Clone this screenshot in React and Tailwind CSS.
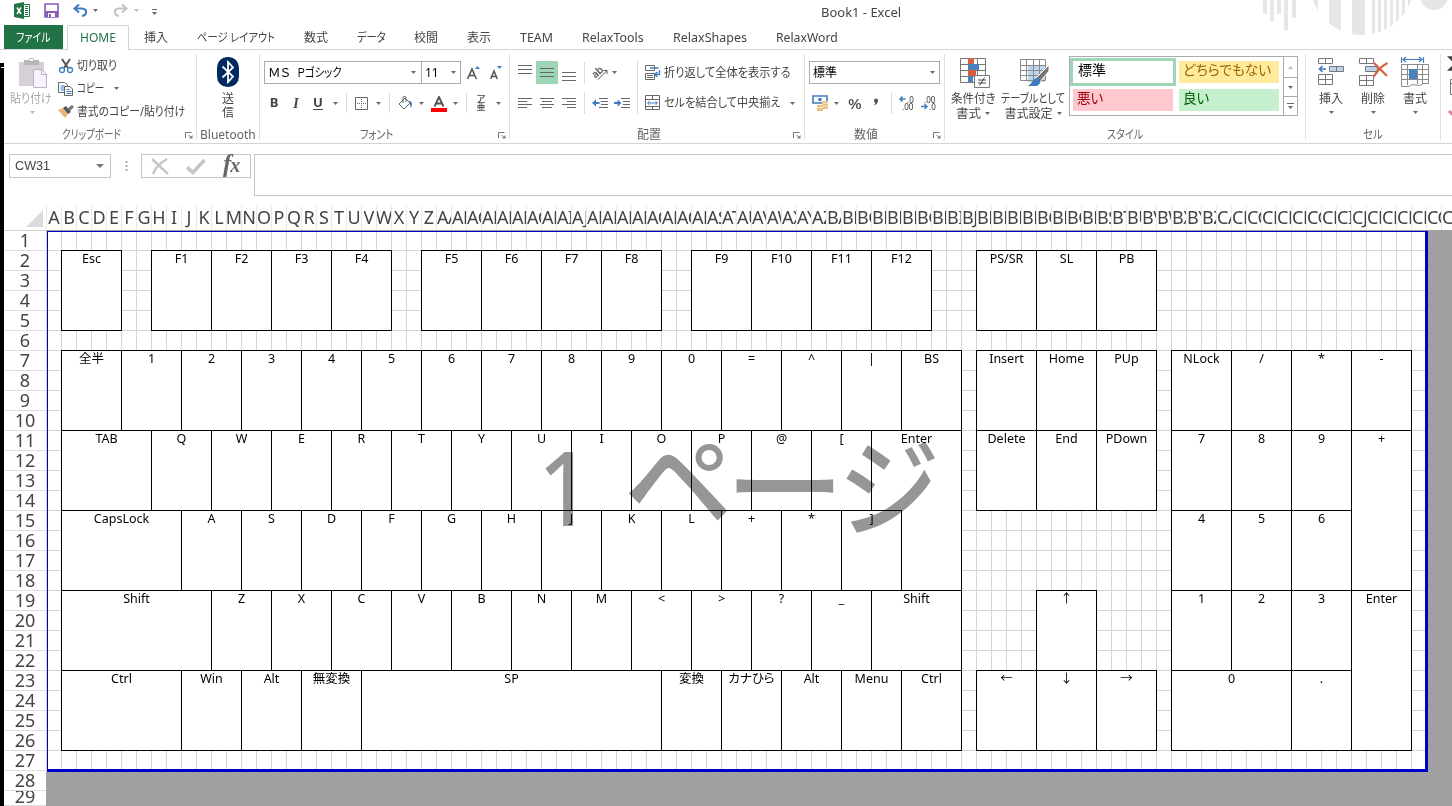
import { useLayoutEffect, useRef, useState } from "react";

/* Text condensed or widened to a given advance width. */
function Fit({ w, className = "", children }) {
  const ref = useRef(null);
  const [s, setS] = useState(1);
  useLayoutEffect(() => {
    setS(w / ref.current.offsetWidth);
  }, [w]);
  return (
    <span className={"block shrink-0 whitespace-nowrap " + className} style={{ width: w }}>
      <span ref={ref} className="inline-block origin-left [font-feature-settings:'palt']" style={{ transform: `scaleX(${s})` }}>
        {children}
      </span>
    </span>
  );
}

function Ic({ w, h, className = "", children }) {
  return (
    <svg width={w} height={h} viewBox={`0 0 ${w} ${h}`} className={"block shrink-0 " + className} fill="none">
      {children}
    </svg>
  );
}

const Arrow = ({ c = "#6a6a6a", className = "" }) => (
  <Ic w={5} h={3} className={className}>
    <path d="M0 0H5L2.5 3Z" fill={c} />
  </Ic>
);

const Slot = ({ className, children }) => <div className={"flex h-full shrink-0 items-center justify-center " + className}>{children}</div>;
const Sep = ({ className = "" }) => <div className={"w-px shrink-0 bg-[#dcdcdc] " + className} />;

const Launcher = ({ className = "" }) => (
  <Ic w={8} h={8} className={className}>
    <path d="M0.5 7V1.500H6.500M3.500 4L6.500 7" stroke="#777" />
    <path d="M7.500 4V7.500H4Z" fill="#777" />
  </Ic>
);

function Group({ className, label, lw, ml, launch, children }) {
  return (
    <div className={"flex h-[93px] shrink-0 flex-col " + className}>
      <div className="flex h-[75px]">{children}</div>
      <div className="flex h-[18px] items-center pt-[2px] text-[12px] leading-[18px] text-[#666]">
        <Fit w={lw} className={ml}>
          {label}
        </Fit>
        {launch && <Launcher className={launch} />}
      </div>
    </div>
  );
}
const GroupSep = () => <div className="mt-[4px] h-[86px] w-px shrink-0 bg-[#e1e1e1]" />;

const Lines = ({ rows }) => (
  <Ic w={14} h={16}>
    {rows.map(([y, x, l], i) => (
      <path key={i} d={`M${x} ${y + 0.5}h${l}`} stroke="#666" />
    ))}
  </Ic>
);

const tabs = [
  ["挿入", 24, "ml-[15px]"],
  ["ページ レイアウト", 78, "ml-[29px]"],
  ["数式", 24, "ml-[29px]"],
  ["データ", 29, "ml-[29px]"],
  ["校閲", 24, "ml-[28px]"],
  ["表示", 24, "ml-[29px]"],
  ["TEAM", 33, "ml-[29px]"],
  ["RelaxTools", 62, "ml-[29px]"],
  ["RelaxShapes", 74, "ml-[29px]"],
  ["RelaxWord", 62, "ml-[29px]"],
];

function TitleBar() {
  return (
    <div className="flex h-[25px] w-full">
      <Ic w={17} h={17} className="ml-[14px] mt-[2px]">
        <path d="M0 2L10 0V17L0 15Z" fill="#217346" />
        <path d="M10 2.500H15.500V14.500H10" stroke="#217346" />
        <path d="M11 4.500h3M11 6.500h3M11 8.500h3M11 10.500h3M11 12.500h3" stroke="#217346" />
        <path d="M3 5.500L7 12M7 5.500L3 12" stroke="#fff" strokeWidth="1.500" />
      </Ic>
      <Ic w={15} h={15} className="ml-[13px] mt-[3px]">
        <path d="M1 1H14V14H1Z" stroke="#8a5cb5" strokeWidth="1.600" />
        <path d="M1 8H14V14H1Z" fill="#8a5cb5" />
        <path d="M4 10H11V14H4Z" fill="#fff" />
        <path d="M5 11H7V14H5Z" fill="#8a5cb5" />
      </Ic>
      <Ic w={15} h={13} className="ml-[14px] mt-[4px]">
        <path d="M1.500 4.500H9C15 5 14 11 9 12M6 0.500L1.500 4.500L6 8.500" stroke="#3f7cbf" strokeWidth="2" />
      </Ic>
      <Arrow className="ml-[5px] mt-[9px]" />
      <Ic w={15} h={13} className="ml-[15px] mt-[4px]">
        <path d="M13.500 4.500H6C0 5 1 11 6 12M9 0.500L13.500 4.500L9 8.500" stroke="#c3c3c3" strokeWidth="2" />
      </Ic>
      <Arrow c="#bbb" className="ml-[6px] mt-[9px]" />
      <Ic w={5} h={7} className="ml-[13px] mt-[9px]">
        <path d="M0 .5H5" stroke="#666" />
        <path d="M0 3H5L2.500 6Z" fill="#666" />
      </Ic>
      <Fit w={80} className="ml-[664px] mt-[4px] text-[12px] leading-[18px] text-[#444]">
        Book1 - Excel
      </Fit>
    </div>
  );
}

function TabRow() {
  return (
    <div className="flex h-[25px] items-stretch border-b border-[#d4d4d4] text-[12px] leading-[26px] text-[#444]">
      <div className="ml-[4px] flex w-[59px] bg-[#217346] text-white">
        <Fit w={35} className="ml-[12px]">
          ファイル
        </Fit>
      </div>
      <div className="-mb-px ml-[4px] flex w-[62px] border border-b-0 border-[#d4d4d4] bg-white leading-[24px] text-[#217346]">
        <Fit w={36} className="ml-[12px]">
          HOME
        </Fit>
      </div>
      {tabs.map(([t, w, m]) => (
        <Fit key={t} w={w} className={m}>
          {t}
        </Fit>
      ))}
    </div>
  );
}

function Clipboard() {
  return (
    <Group className="ml-[4px] w-[192px]" label="クリップボード" lw={59} ml="ml-[58px]" launch="ml-[64px]">
      <div className="ml-[4px] flex w-[48px] flex-col items-center text-[12px] leading-[16px] text-[#a9a9a9]">
        <Ic w={29} h={32} className="ml-[2px] mt-[7px]">
          <path d="M0 5H25V29H0Z" fill="#d6cfd6" />
          <path d="M5 3H10C10 0 15 0 15 3H20V8H5Z" fill="#b9b4b9" />
          <path d="M11 2H14V4H11Z" fill="#fff" />
          <path d="M14.500 12.500H23L27.500 17V30.500H14.500Z" fill="#f7f3fa" stroke="#bcb0c4" />
          <path d="M22.500 12.500V17.500H27.500" stroke="#bcb0c4" />
        </Ic>
        <Fit w={42} className="mt-[2px] -ml-[2px]">
          貼り付け
        </Fit>
        <Arrow c="#bbb" className="mt-[4px]" />
      </div>
      <div className="ml-[2px] flex flex-col pt-[4px] text-[12px] text-[#444]">
        <div className="flex h-[23px] items-center">
          <Ic w={16} h={16}>
            <path d="M4 1L10 10M12 1L6 10" stroke="#555" strokeWidth="2" />
            <circle cx="4" cy="12" r="2.500" stroke="#3f7cbf" strokeWidth="1.300" />
            <circle cx="12" cy="12" r="2.500" stroke="#3f7cbf" strokeWidth="1.300" />
          </Ic>
          <Fit w={40} className="ml-[3px]">
            切り取り
          </Fit>
        </div>
        <div className="flex h-[23px] items-center">
          <Ic w={16} h={16}>
            <path d="M.5 1.500H6.500L9.500 4V11.500H.5Z" fill="#fff" stroke="#666" />
            <path d="M2.500 5h4M2.500 7h4M2.500 9h4" stroke="#3f7cbf" />
            <path d="M6.500 5.500H12L14.500 8V14.500H6.500Z" fill="#fff" stroke="#666" />
            <path d="M8.500 8.500h3M8.500 10.500h5M8.500 12.500h5" stroke="#3f7cbf" />
          </Ic>
          <Fit w={27} className="ml-[3px]">
            コピー
          </Fit>
          <Arrow className="ml-[10px]" />
        </div>
        <div className="flex h-[23px] items-center">
          <Ic w={16} h={14}>
            <path d="M0 5L5 3L10 9L7 13Z" fill="#eab676" />
            <path d="M5 3L8 1L13 7L10 9Z" fill="#555" />
            <path d="M9 4L14 0L16 2L12 6Z" fill="#777" />
          </Ic>
          <Fit w={108} className="ml-[3px]">
            書式のコピー/貼り付け
          </Fit>
        </div>
      </div>
    </Group>
  );
}

function Bluetooth() {
  return (
    <Group className="w-[62px]" label="Bluetooth" lw={56} ml="ml-[3px]">
      <div className="flex w-full flex-col items-center text-[12px] leading-[14px] text-[#444]">
        <Ic w={22} h={30} className="mt-[7px]">
          <rect width="22" height="30" rx="10.500" fill="#00295f" />
          <path d="M5.500 9.500L16 19.500L11 25V5L16 10.500L5.500 20.500" stroke="#fff" strokeWidth="1.800" />
        </Ic>
        <div className="mt-[5px]">送</div>
        <div>信</div>
      </div>
    </Group>
  );
}

function FontGroup() {
  return (
    <Group className="w-[249px]" label="フォント" lw={33} ml="ml-[100px]" launch="ml-[105px]">
      <div className="flex flex-col text-[12px] text-[#444]">
        <div className="mt-[11px] flex h-[23px] items-center">
          <div className="ml-[4px] flex h-[23px] w-[158px] items-center border border-[#ababab] text-black">
            <span className="ml-[3px] flex w-[75px] shrink-0">
              <Fit w={22}>ＭＳ</Fit>
              <Fit w={45} className="ml-[7px]">
                Ｐゴシック
              </Fit>
            </span>
            <Arrow className="ml-[68px]" />
          </div>
          <div className="-ml-px flex h-[23px] w-[40px] items-center border border-[#ababab] text-black">
            <Fit w={14} className="ml-[3px]">
              11
            </Fit>
            <Arrow className="ml-[12px]" />
          </div>
          <Ic w={14} h={15} className="ml-[6px]">
            <path d="M0.700 14L5 4L9.300 14M2.200 10.500H7.800" stroke="#555" strokeWidth="1.600" />
            <path d="M8 4L10.500 1L13 4Z" fill="#3f7cbf" />
          </Ic>
          <Ic w={13} h={15} className="ml-[9px]">
            <path d="M0.700 14L4 6L7.300 14M2 11.500H6" stroke="#555" strokeWidth="1.500" />
            <path d="M7 1L9.500 4L12 1Z" fill="#3f7cbf" />
          </Ic>
        </div>
        <div className="mt-[8px] flex h-[22px] items-center pl-[3px]">
          <Slot className="w-[22px] text-[13px] font-bold">B</Slot>
          <Slot className="w-[22px] font-['Liberation_Serif'] text-[14px] font-bold italic">I</Slot>
          <Slot className="w-[22px] text-[13px] font-bold underline underline-offset-2">U</Slot>
          <Slot className="w-[12px]"><Arrow /></Slot>
          <Slot className="w-[10px]"><Sep className="h-[20px]" /></Slot>
          <Slot className="w-[21px]">
            <Ic w={13} h={13}>
              <path d="M.5.5H12.500V12.500H.5Z" stroke="#666" />
              <path d="M6.500 2V12M2 6.500H12" stroke="#666" strokeDasharray="1 1" />
            </Ic>
          </Slot>
          <Slot className="w-[12px]"><Arrow /></Slot>
          <Slot className="w-[10px]"><Sep className="h-[20px]" /></Slot>
          <Slot className="w-[21px]">
            <Ic w={15} h={14} className="ml-[2px]">
              <path d="M1 8L7 2L12 7L6 13Z" stroke="#666" />
              <path d="M5 7V1.500C5 0 8 0 8 2V6" stroke="#666" />
              <path d="M11 5C14 5 15 8 13 12C12 10 12 7 11 5Z" fill="#3f7cbf" />
            </Ic>
          </Slot>
          <Slot className="w-[12px]"><Arrow /></Slot>
          <Slot className="w-[24px]">
            <Ic w={16} h={16} className="mt-[2px]">
              <path d="M3.500 10.500L8 1L12.500 10.500M5 7.500H11" stroke="#555" strokeWidth="1.900" />
              <path d="M0 12H16V16H0Z" fill="#f00" />
            </Ic>
          </Slot>
          <Slot className="w-[9px]"><Arrow /></Slot>
          <Slot className="w-[12px]"><Sep className="h-[20px]" /></Slot>
          <Slot className="w-[20px] flex-col pr-[2px] text-[9px] leading-[8px] font-medium">
            <span>ア</span>
            <span>亜</span>
          </Slot>
          <Slot className="w-[12px]"><Arrow /></Slot>
        </div>
      </div>
    </Group>
  );
}

function AlignGroup() {
  return (
    <Group className="w-[294px]" label="配置" lw={24} ml="ml-[127px]" launch="ml-[132px]">
      <div className="flex w-[127px] shrink-0 flex-col pt-[11px]">
        <div className="flex h-[23px] items-center">
          <Slot className="ml-[4px] w-[22px]"><Lines rows={[[0, 0, 14], [4, 0, 14], [8, 0, 14]]} /></Slot>
          <Slot className="w-[22px] bg-[#9fd5b7]"><Lines rows={[[3, 0, 14], [7, 0, 14], [11, 0, 14]]} /></Slot>
          <Slot className="w-[22px]"><Lines rows={[[7, 0, 14], [11, 0, 14], [15, 0, 14]]} /></Slot>
          <Slot className="w-[8px]"><Sep className="h-[22px]" /></Slot>
          <Slot className="w-[22px]">
            <Ic w={18} h={16} className="ml-[2px]">
              <text x="1" y="11" fontSize="10" fill="#555" transform="rotate(-42 6 8)" stroke="#555" strokeWidth=".3">ab</text>
              <path d="M7 14.500L16 5.500M12.500 5.500H16V9" stroke="#555" />
            </Ic>
          </Slot>
          <Slot className="w-[9px]"><Arrow /></Slot>
        </div>
        <div className="mt-[8px] flex h-[22px] items-center">
          <Slot className="ml-[4px] w-[22px]"><Lines rows={[[3, 0, 14], [6, 0, 9], [9, 0, 14], [12, 0, 9]]} /></Slot>
          <Slot className="w-[22px]"><Lines rows={[[3, 0, 14], [6, 2, 10], [9, 0, 14], [12, 2, 10]]} /></Slot>
          <Slot className="w-[22px]"><Lines rows={[[3, 0, 14], [6, 5, 9], [9, 0, 14], [12, 5, 9]]} /></Slot>
          <Slot className="w-[8px]"><Sep className="h-[22px]" /></Slot>
          <Slot className="w-[24px]">
            <Ic w={16} h={10}>
              <path d="M7 .5h9M9 3.500h7M9 6.500h7M7 9.500h9" stroke="#666" />
              <path d="M0 5L4 1.500V4H7.500V6H4V8.500Z" fill="#3f7cbf" />
            </Ic>
          </Slot>
          <Slot className="w-[20px]">
            <Ic w={16} h={10}>
              <path d="M7 .5h9M9 3.500h7M9 6.500h7M7 9.500h9" stroke="#666" />
              <path d="M7.500 5L3.500 1.500V4H0V6H3.500V8.500Z" fill="#3f7cbf" />
            </Ic>
          </Slot>
        </div>
      </div>
      <Sep className="mt-[10px] h-[54px]" />
      <div className="ml-[7px] flex flex-col pt-[11px] text-[12px] text-[#444]">
        <div className="flex h-[23px] items-center">
          <Ic w={16} h={16}>
            <path d="M.5.5H9.500V5.500H.5ZM.5 8.500H9.500V14.500H.5ZM2 10.500h6M2 12.500h6" stroke="#666" />
            <path d="M5 3H13.500M14.500 5V9.500H10M12.500 7L9.500 9.500L12.500 12" stroke="#3f7cbf" strokeWidth="1.400" />
          </Ic>
          <Fit w={127} className="ml-[3px]">
            折り返して全体を表示する
          </Fit>
        </div>
        <div className="mt-[8px] flex h-[22px] items-center">
          <Ic w={16} h={16}>
            <path d="M.5.5H14.500V14.500H.5ZM.5 4.500H14.500M.5 11.500H14.500M7.500 0V4M7.500 12V15" stroke="#666" />
            <path d="M3 8H12M4.500 6L2.500 8L4.500 10M10.500 6L12.500 8L10.500 10" stroke="#3f7cbf" />
          </Ic>
          <Fit w={116} className="ml-[3px]">
            セルを結合して中央揃え
          </Fit>
          <Arrow className="ml-[10px]" />
        </div>
      </div>
    </Group>
  );
}

function NumberGroup() {
  return (
    <Group className="w-[139px]" label="数値" lw={24} ml="ml-[49px]" launch="ml-[55px]">
      <div className="flex flex-col pt-[11px] text-[12px] text-[#444]">
        <div className="ml-[4px] flex h-[23px] w-[131px] items-center border border-[#ababab] text-black">
          <Fit w={24} className="ml-[3px]">
            標準
          </Fit>
          <Arrow className="ml-[93px]" />
        </div>
        <div className="mt-[8px] flex h-[22px] items-center">
          <Ic w={17} h={16} className="ml-[7px]">
            <path d="M1 1H15V8H1Z" stroke="#3f7cbf" strokeWidth="1.600" />
            <circle cx="8" cy="4.500" r="1.800" fill="#3f7cbf" />
            <path d="M10 6H16V14H10ZM5 10H11V16H5Z" fill="#e9bf7b" />
            <path d="M10 8h6M10 11h6M5 12.500h6" stroke="#fff" strokeWidth=".7" />
          </Ic>
          <Arrow className="ml-[5px]" />
          <Fit w={14} className="ml-[9px] text-[15px] font-medium">
            %
          </Fit>
          <Ic w={6} h={8} className="-mt-[3px] ml-[11px]">
            <path d="M1 2.500A2 2 0 0 1 5 2.500C5 5 3.500 6.500 1 7.500C2 6 2.500 5 2 4.500A2 2 0 0 1 1 2.500Z" fill="#555" />
          </Ic>
          <Sep className="ml-[12px] h-[22px]" />
          <Ic w={19} h={14} className="ml-[7px]">
            <path d="M6.500 3H1.500M3.500 .5L1 3L3.500 5.500" stroke="#3f7cbf" strokeWidth="1.500" />
            <text x="8" y="6.500" fontSize="8" fill="#333">.0</text>
            <text x="3" y="14" fontSize="8" fill="#333">.00</text>
          </Ic>
          <Ic w={19} h={14} className="ml-[3px]">
            <path d="M0 10.500H5.500M3.500 8L6 10.500L3.500 13" stroke="#3f7cbf" strokeWidth="1.500" />
            <text x="3" y="6.500" fontSize="8" fill="#333">.00</text>
            <text x="8" y="14" fontSize="8" fill="#333">.0</text>
          </Ic>
        </div>
      </div>
    </Group>
  );
}

function StyleGroup() {
  return (
    <Group className="w-[360px]" label="スタイル" lw={36} ml="ml-[162px]">
      <div className="ml-[6px] flex w-[44px] flex-col items-center text-[12px] leading-[15px] text-[#444]">
        <Ic w={31} h={31} className="mt-[7px] ml-[4px]">
          <path d="M.5 1.500H25.500V25.500H.5ZM.5 7.500H25.500M.5 13.500H25.500M.5 19.500H25.500M8.500 1V25M17.500 1V25" stroke="#777" />
          <path d="M8 1H14V7H8ZM8 13H16V19H8Z" fill="#d75f3d" />
          <path d="M8 7H19V13H8ZM8 19H13V25H8Z" fill="#4a82bd" />
          <path d="M14.500 18.500H29.500V30.500H14.500Z" fill="#fff" stroke="#777" />
          <path d="M18 23h8M18 26h8M24.500 20.500L19.500 28.500" stroke="#444" />
        </Ic>
        <Fit w={45} className="mt-[3px]">
          条件付き
        </Fit>
        <div className="flex items-center gap-[4px]">
          <Fit w={25}>書式</Fit>
          <Arrow />
        </div>
      </div>
      <div className="ml-[6px] flex w-[64px] flex-col items-center text-[12px] leading-[15px] text-[#444]">
        <Ic w={31} h={31} className="mt-[7px] ml-[4px]">
          <path d="M8 8H25V25H8Z" fill="#bcd4ec" />
          <path d="M.5 2.500H25.500V23.500H.5ZM.5 8.500H25.500M.5 13.500H25.500M.5 18.500H25.500M6.500 2V24M13.500 2V24M19.500 2V24" stroke="#8a8a8a" />
          <path d="M29 8V14L19 26L15 22Z" fill="#777" stroke="#fff" />
          <path d="M17 21C21 22 22 26 17 29H7C12 28 12 22 17 21Z" fill="#3f7cbf" />
        </Ic>
        <Fit w={64} className="mt-[3px]">
          テーブルとして
        </Fit>
        <div className="flex items-center gap-[4px]">
          <Fit w={48}>書式設定</Fit>
          <Arrow />
        </div>
      </div>
      <div className="mt-[6px] ml-[4px] flex h-[60px] w-[229px] border border-[#ababab] text-[14px] leading-[18px]">
        <div className="grid w-[213px] grid-cols-[106px_106px] grid-rows-[28px_28px] gap-y-[1px] pt-px">
          <div className="border-[3px] border-[#9fd5b7] pl-[5px] text-black">
            <Fit w={28}>標準</Fit>
          </div>
          <div className="mx-[3px] mt-[3px] h-[22px] bg-[#ffeb9c] pl-[4px] text-[#9c6500]">
            <Fit w={88}>どちらでもない</Fit>
          </div>
          <div className="mx-[3px] mt-[2px] h-[22px] bg-[#ffc7ce] pl-[4px] text-[#9c0006]">
            <Fit w={26}>悪い</Fit>
          </div>
          <div className="mx-[3px] mt-[2px] h-[22px] bg-[#c6efce] pl-[4px] text-[#006100]">
            <Fit w={26}>良い</Fit>
          </div>
        </div>
        <div className="grid w-[14px] grid-rows-[21px_19px_18px] border-l border-[#ababab]">
          <Slot className="border-b border-[#ababab]">
            <Arrow c="#bbb" className="rotate-180" />
          </Slot>
          <Slot className="border-b border-[#ababab]">
            <Arrow />
          </Slot>
          <Slot className="flex-col">
            <div className="mb-[2px] h-px w-[7px] bg-[#666]" />
            <Arrow />
          </Slot>
        </div>
      </div>
    </Group>
  );
}

const CellButton = ({ label, icon, className }) => (
  <div className={"flex flex-col items-center text-[12px] leading-[15px] text-[#444] " + className}>
    <div className="mt-[6px] h-[32px]">{icon}</div>
    <Fit w={24} className="mt-[3px]">
      {label}
    </Fit>
    <Arrow className="mt-[5px]" />
  </div>
);

function CellsGroup() {
  return (
    <Group className="w-[134px]" label="セル" lw={20} ml="ml-[57px]">
      <CellButton
        label="挿入"
        className="ml-[4px] w-[42px]"
        icon={
          <Ic w={27} h={32}>
            <path d="M.5 2.500H14.500V7.500H.5ZM7.500 2V8M.5 18.500H14.500V28.500H.5ZM.5 23.500H14.500M7.500 18V29" stroke="#777" />
            <path d="M11.500 10.500H25.500V15.500H11.500ZM18.500 10V16" fill="#bcd4ec" stroke="#777" />
            <path d="M8 13H2M4.500 10L1.500 13L4.500 16" stroke="#3f7cbf" strokeWidth="1.700" />
          </Ic>
        }
      />
      <CellButton
        label="削除"
        className="w-[42px]"
        icon={
          <Ic w={30} h={32} className="ml-[2px]">
            <path d="M.5 2.500H14.500V7.500H.5ZM7.500 2V8M.5 19.500H14.500V29.500H.5ZM.5 24.500H14.500M7.500 19V30" stroke="#777" />
            <path d="M6.500 10.500H17L19 13L17 15.500H6.500Z" fill="#bcd4ec" stroke="#777" />
            <path d="M15 7L28 20M28.500 7C23 10 18 15 15 20.500" stroke="#d9603f" strokeWidth="2.200" />
          </Ic>
        }
      />
      <CellButton
        label="書式"
        className="w-[42px]"
        icon={
          <Ic w={28} h={32}>
            <path d="M.5 1V7M22.500 1V7M2 3.500H21M5 1L2 3.500L5 6M18 1L21 3.500L18 6" stroke="#3f7cbf" strokeWidth="1.200" />
            <path d="M.5 8.500H27.500V27.500H22C18 32 12 26 8 30.500H.5ZM.5 13.500H27.500M.5 23.500H27.500M6.500 8V29M16.500 8V28M21.500 8V28M.5 18.500H27.500" stroke="#8a8a8a" />
            <path d="M8 13H16V23H8Z" fill="#4a82bd" />
          </Ic>
        }
      />
    </Group>
  );
}

function Ribbon() {
  return (
    <div className="flex h-[94px] overflow-hidden border-b border-[#d4d4d4]">
      <Clipboard />
      <GroupSep />
      <Bluetooth />
      <GroupSep />
      <FontGroup />
      <GroupSep />
      <AlignGroup />
      <GroupSep />
      <NumberGroup />
      <GroupSep />
      <StyleGroup />
      <GroupSep />
      <CellsGroup />
      <GroupSep />
      <Ic w={11} h={70} className="mt-[5px]">
        <path d="M16 2.500H9L15 8.500L9 14.500H16" stroke="#444" strokeWidth="2.500" />
        <path d="M16 24.500H9.500V39.500H16M9.500 28.500H16" stroke="#777" />
        <path d="M8 56L12 60L16 54" stroke="#e87b93" strokeWidth="3" />
      </Ic>
    </div>
  );
}

function FormulaBar() {
  return (
    <div className="flex h-[62px] items-start pt-[10px]">
      <div className="ml-[9px] flex h-[24px] w-[102px] items-center border border-[#c6c6c6]">
        <Fit w={35} className="ml-[5px] font-['Liberation_Sans'] text-[13px] text-[#444]">
          CW31
        </Fit>
        <Ic w={8} h={4} className="ml-[46px]">
          <path d="M0 0H8L4 4Z" fill="#777" />
        </Ic>
      </div>
      <Ic w={3} h={11} className="mt-[7px] ml-[14px]">
        <path d="M.5 0h2v2h-2zM.5 4h2v2h-2zM.5 8h2v2h-2z" fill="#aaa" />
      </Ic>
      <div className="ml-[13px] flex h-[24px] w-[110px] items-center border border-[#c6c6c6]">
        <Ic w={18} h={17} className="ml-[9px]">
          <path d="M1 1L17 16M16 1C9 5 4 10 2 16" stroke="#c6c6c6" strokeWidth="2.400" />
        </Ic>
        <Ic w={20} h={17} className="ml-[17px]">
          <path d="M1 9.500L7 14.500L18.500 2" stroke="#c6c6c6" strokeWidth="3.600" />
        </Ic>
        <span className="-mt-[3px] ml-[17px] font-['Liberation_Serif'] text-[25px] leading-[22px] font-bold tracking-[-1px] text-[#666] italic">
          f<span className="text-[20px]">x</span>
        </span>
      </div>
      <div className="ml-[3px] h-[42px] flex-1 border border-r-0 border-[#c6c6c6]" />
    </div>
  );
}

const colName = (i) => (i < 26 ? "" : String.fromCharCode(64 + Math.floor(i / 26))) + String.fromCharCode(65 + (i % 26));

/* [label, first column, column span, first row, row span, extra classes] */
const keys = [
  ["Esc", 2, 4, 2, 4],
  ...["F1", "F2", "F3", "F4"].map((l, i) => [l, 8 + i * 4, 4, 2, 4]),
  ...["F5", "F6", "F7", "F8"].map((l, i) => [l, 26 + i * 4, 4, 2, 4]),
  ...["F9", "F10", "F11", "F12"].map((l, i) => [l, 44 + i * 4, 4, 2, 4]),
  ...["PS/SR", "SL", "PB"].map((l, i) => [l, 63 + i * 4, 4, 2, 4]),
  ...["全半", "1", "2", "3", "4", "5", "6", "7", "8", "9", "0", "=", "^", "|"].map((l, i) => [l, 2 + i * 4, 4, 7, 4]),
  ["BS", 58, 4, 7, 4],
  ["TAB", 2, 6, 11, 4],
  ...["Q", "W", "E", "R", "T", "Y", "U", "I", "O", "P", "@", "["].map((l, i) => [l, 8 + i * 4, 4, 11, 4]),
  ["Enter", 56, 6, 11, 4, "border-b-0"],
  ["", 58, 4, 15, 4, "border-t-0"],
  ["CapsLock", 2, 8, 15, 4],
  ...["A", "S", "D", "F", "G", "H", "J", "K", "L", "+", "*", "]"].map((l, i) => [l, 10 + i * 4, 4, 15, 4]),
  ["Shift", 2, 10, 19, 4],
  ...["Z", "X", "C", "V", "B", "N", "M", "<", ">", "?", "_"].map((l, i) => [l, 12 + i * 4, 4, 19, 4]),
  ["Shift", 56, 6, 19, 4],
  ["Ctrl", 2, 8, 23, 4],
  ["Win", 10, 4, 23, 4],
  ["Alt", 14, 4, 23, 4],
  ["無変換", 18, 4, 23, 4],
  ["SP", 22, 20, 23, 4],
  ["変換", 42, 4, 23, 4],
  ["カナひら", 46, 4, 23, 4],
  ["Alt", 50, 4, 23, 4],
  ["Menu", 54, 4, 23, 4],
  ["Ctrl", 58, 4, 23, 4],
  ...["Insert", "Home", "PUp"].map((l, i) => [l, 63 + i * 4, 4, 7, 4]),
  ...["Delete", "End", "PDown"].map((l, i) => [l, 63 + i * 4, 4, 11, 4]),
  ["↑", 67, 4, 19, 4],
  ...["←", "↓", "→"].map((l, i) => [l, 63 + i * 4, 4, 23, 4]),
  ...["NLock", "/", "*", "-"].map((l, i) => [l, 76 + i * 4, 4, 7, 4]),
  ...["7", "8", "9"].map((l, i) => [l, 76 + i * 4, 4, 11, 4]),
  ...["4", "5", "6"].map((l, i) => [l, 76 + i * 4, 4, 15, 4]),
  ...["1", "2", "3"].map((l, i) => [l, 76 + i * 4, 4, 19, 4]),
  ["+", 88, 4, 11, 8],
  ["Enter", 88, 4, 19, 8],
  ["0", 76, 8, 23, 4],
  [".", 84, 4, 23, 4],
];

function Sheet() {
  return (
    <div className="flex h-[600px] flex-col overflow-hidden">
      <div className="flex h-[24px] shrink-0">
        <div className="flex w-[46px] shrink-0 items-end justify-end pr-[3px] pb-[3px]">
          <Ic w={17} h={17}>
            <path d="M17 0V17H0Z" fill="#dcdcdc" />
          </Ic>
        </div>
        {Array.from({ length: 94 }, (_, i) => (
          <div
            key={i}
            className={
              "flex w-[15px] shrink-0 overflow-hidden border-l border-[#e8e8e8] text-[18px] leading-[23px] text-[#444] " +
              (i < 26 ? "justify-center" : "justify-start tracking-[-0.4px]")
            }
          >
            {colName(i)}
          </div>
        ))}
      </div>
      <div className="flex min-h-0 flex-1">
        <div className="ml-[4px] flex w-[42px] shrink-0 flex-col overflow-hidden border-t border-[#d4d4d4]">
          {Array.from({ length: 29 }, (_, i) => (
            <div
              key={i}
              className={
                "flex shrink-0 justify-center overflow-hidden border-b border-[#dedede] text-[18px] text-[#444] " +
                (i < 28 ? "h-[20px] leading-[18px]" : "h-[15px] leading-[10px]")
              }
            >
              {i + 1}
            </div>
          ))}
        </div>
        <div className="relative flex-1 overflow-hidden border-t border-[#a0a0a0] bg-[#a0a0a0]">
          <div className="-mt-px grid h-[542px] w-[1382px] grid-cols-[repeat(92,15px)] grid-rows-[repeat(27,20px)] bg-white bg-[linear-gradient(to_right,#d4d4d4_1px,transparent_1px),linear-gradient(to_bottom,#d4d4d4_1px,transparent_1px)] bg-[size:15px_20px] text-[12.5px] leading-[15px] text-black">
            {keys.map(([l, c, cs, r, rs, x = ""], i) => (
              <div
                key={i}
                className={"-mr-px -mb-px overflow-hidden border border-black bg-white text-center whitespace-nowrap [font-feature-settings:'palt'] " + x}
                style={{ gridArea: `${r} / ${c} / span ${rs} / span ${cs}` }}
              >
                {l}
              </div>
            ))}
          </div>
          <div className="absolute top-0 left-px h-[541px] w-[1381px] border-t border-r-[3px] border-b-[3px] border-l border-[#0000c8]" />
          <div className="absolute top-[194px] left-[492px] flex text-[#969696] mix-blend-multiply">
            <Fit w={54} className="text-[103px] leading-[122px] font-medium">
              1
            </Fit>
            <Fit w={109} className="ml-[32px] text-[107px] leading-[112px] font-medium [&>span]:[font-feature-settings:normal]">
              ペ
            </Fit>
            <Fit w={120} className="-ml-[8px] text-[107px] leading-[122px] font-medium [&>span]:[font-feature-settings:normal]">
              ー
            </Fit>
            <Fit w={102} className="-ml-[7px] text-[107px] leading-[123px] font-medium [&>span]:[font-feature-settings:normal]">
              ジ
            </Fit>
          </div>
        </div>
      </div>
    </div>
  );
}

function Ornament() {
  return (
    <svg width="192" height="36" viewBox="0 0 192 36" className="absolute top-0 right-0" fill="#e6e6e6">
      <path d="M3 0h4v14h-4zM10 0h4v21h-4zM17 0h4v14h-4zM24 0h4v30h-4zM32 0h4v18h-4z" />
      <clipPath id="disc">
        <circle cx="102" cy="-17" r="52" />
      </clipPath>
      <g clipPath="url(#disc)">
        <path d="M51 0h7v36h-7zM69 0h12v36h-12zM92 0h13v36h-13zM112 0h3v36h-3zM118 0h3v36h-3zM124 0h3v36h-3zM130 0h3v36h-3zM136 0h3v36h-3zM142 0h3v36h-3zM148 0h3v36h-3z" />
      </g>
      <circle cx="174" cy="-4" r="14" />
    </svg>
  );
}

export default function App() {
  return (
    <div className="relative h-[806px] w-[1452px] overflow-hidden bg-white font-['Noto_Sans','Noto_Sans_CJK_JP',sans-serif]">
      <Ornament />
      <div className="flex flex-col">
        <TitleBar />
        <TabRow />
        <Ribbon />
        <FormulaBar />
        <Sheet />
      </div>
      <div className="absolute top-[63px] left-0 h-[743px] w-[4px] bg-black">
        <div className="mt-[4px] ml-px h-px w-[3px] bg-white" />
      </div>
    </div>
  );
}
